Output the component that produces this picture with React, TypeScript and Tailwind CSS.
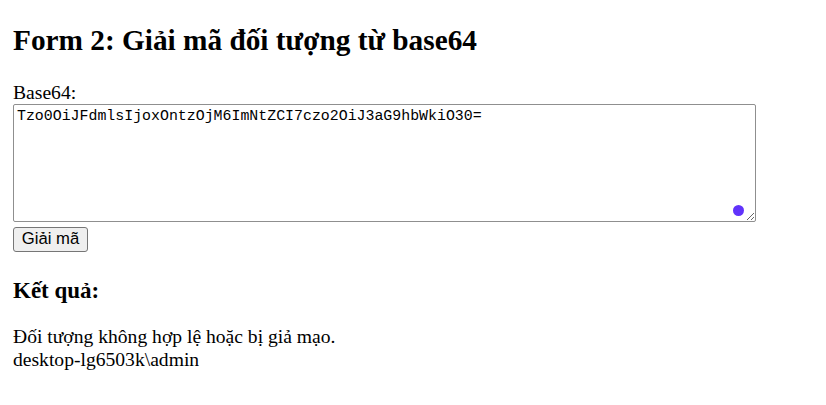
export default function App() {
  return (
    <div className="min-h-[405px] bg-white pl-[13px] pt-[23px] font-['Liberation_Serif',serif] text-black">
      {/* Tiêu đề */}
      <h1 className="text-[29.3px] font-bold leading-[34px]">Form 2: Giải mã đối tượng từ base64</h1>

      {/* Form */}
      <form className="mt-[25px]" onSubmit={(e) => e.preventDefault()}>
        <label className="block text-[19.6px] leading-[22px]">Base64:</label>
        <div className="relative w-[743px]">
          <textarea
            defaultValue="Tzo0OiJFdmlsIjoxOntzOjM6ImNtZCI7czo2OiJ3aG9hbWkiO30="
            className="block h-[118px] w-[743px] rounded-[2px] border border-[#8f8f8f] px-[3px] py-[2px] font-['Liberation_Mono',monospace] text-[14.9px] leading-[18px] outline-none"
          />
          <span className="absolute bottom-[6px] right-[12px] h-[11px] w-[11px] rounded-full bg-[#6133fb]" />
        </div>
        <button
          type="submit"
          className="mt-[5px] h-[25px] w-[75px] rounded-[3px] border border-[#767676] bg-[#efefef] font-['Liberation_Sans',sans-serif] text-[16.67px] leading-none"
        >
          Giải mã
        </button>
      </form>

      {/* Kết quả */}
      <h3 className="mt-[25px] text-[23px] font-bold leading-[27px]">Kết quả:</h3>
      <div className="mt-[21px] text-[19.6px] leading-[23px]">
        <p>Đối tượng không hợp lệ hoặc bị giả mạo.</p>
        <p>desktop-lg6503k\admin</p>
      </div>
    </div>
  );
}
